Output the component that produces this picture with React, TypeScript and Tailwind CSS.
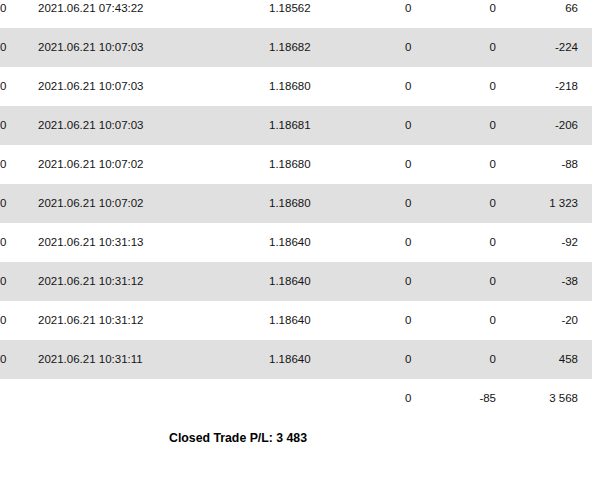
const rows = [
  { d: "2021.06.21 07:43:22", p: "1.18562", a: "0", b: "0", v: "66" },
  { d: "2021.06.21 10:07:03", p: "1.18682", a: "0", b: "0", v: "-224" },
  { d: "2021.06.21 10:07:03", p: "1.18680", a: "0", b: "0", v: "-218" },
  { d: "2021.06.21 10:07:03", p: "1.18681", a: "0", b: "0", v: "-206" },
  { d: "2021.06.21 10:07:02", p: "1.18680", a: "0", b: "0", v: "-88" },
  { d: "2021.06.21 10:07:02", p: "1.18680", a: "0", b: "0", v: "1 323" },
  { d: "2021.06.21 10:31:13", p: "1.18640", a: "0", b: "0", v: "-92" },
  { d: "2021.06.21 10:31:12", p: "1.18640", a: "0", b: "0", v: "-38" },
  { d: "2021.06.21 10:31:12", p: "1.18640", a: "0", b: "0", v: "-20" },
  { d: "2021.06.21 10:31:11", p: "1.18640", a: "0", b: "0", v: "458" },
];

function Row({ first, d, p, a, b, v, grey }: { first: string; d: string; p: string; a: string; b: string; v: string; grey?: boolean }) {
  return (
    <div className={`flex h-[39px] w-[592px] items-center pr-[14px] ${grey ? "bg-[#e0e0e0]" : ""}`}>
      <span className="w-[38px]">{first}</span>
      <span className="w-[231px]">{d}</span>
      <span className="w-[136px]">{p}</span>
      <span className="w-[20px]">{a}</span>
      <span className="w-[71px] text-right">{b}</span>
      <span className="w-[82px] text-right">{v}</span>
    </div>
  );
}

export default function App() {
  return (
    <div className="h-[479px] w-[600px] overflow-hidden bg-white font-['Liberation_Sans',Arial,sans-serif] text-[11.5px] text-[#141414]">
      <div className="-mt-[11px]">
        {rows.map((r, i) => (
          <Row key={i} first="0" {...r} grey={i % 2 === 1} />
        ))}
        <Row first="" d="" p="" a="0" b="-85" v="3 568" />
      </div>
      <p className="mt-[13px] pl-[169px] text-[12.3px] font-bold leading-[14px] text-black">
        Closed Trade P/L: 3 483
      </p>
    </div>
  );
}
